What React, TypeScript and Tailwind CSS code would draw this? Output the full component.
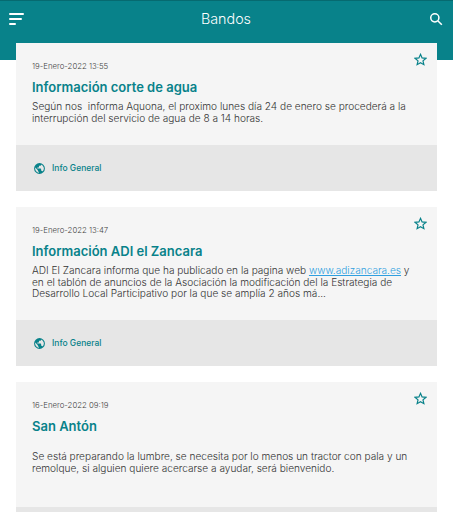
import React from "react"

type Bando = {
	date: string,
	title: string,
	body: React.ReactNode,
	bodyClass: string,
	tag?: boolean,
}

const bandos: Bando[] = [
	{
		date: "19-Enero-2022 13:55",
		title: "Información corte de agua",
		body: <>Según nos&nbsp; informa Aquona, el proximo lunes día 24 de enero se procederá a la interrupción del servicio de agua de 8 a 14 horas.</>,
		bodyClass: "h-[44px] mt-[4px]",
		tag: true,
	},
	{
		date: "19-Enero-2022 13:47",
		title: "Información ADI el Zancara",
		body: <>ADI El Zancara informa que ha publicado en la pagina web <span className="text-[#2f9fe0] underline">www.adizancara.es</span> y en el tablón de anuncios de la Asociación la modificación del la Estrategia de Desarrollo Local Participativo por la que se amplía 2 años má...</>,
		bodyClass: "h-[55px] mt-[4px]",
		tag: true,
	},
	{
		date: "16-Enero-2022 09:19",
		title: "San Antón",
		body: <>Se está preparando la lumbre, se necesita por lo menos un tractor con pala y un remolque, si alguien quiere acercarse a ayudar, será bienvenido.</>,
		bodyClass: "h-[56px] mt-[15px]",
	},
]

function Star() {
	return (
		<svg width="13" height="13" viewBox="0 0 24 24" fill="none" stroke="#08828a" strokeWidth="2.2" strokeLinejoin="miter" className="shrink-0 mt-[10px]">
			<path d="M12 2.5l2.9 6.6 7.1.7-5.4 4.7 1.6 7-6.2-3.7-6.2 3.7 1.6-7L2 9.8l7.1-.7z" />
		</svg>
	)
}

function Card({ bando }: { bando: Bando }) {
	return (
		<div className="bg-[#f5f5f5]">
			<div className="pl-[16px] pr-[10px]">
				<div className="flex justify-between">
					<div className="text-[7.8px] leading-[12px] font-light text-[#444] mt-[17px]">{bando.date}</div>
					<Star />
				</div>
				<div className="text-[13px] leading-[20px] font-semibold text-[#08828a] mt-[5px]">{bando.title}</div>
				<div className={"text-[10.1px] leading-[11.7px] font-light text-[#333] pr-[15px] " + bando.bodyClass}>{bando.body}</div>
			</div>
			{bando.tag ? (
				<div className="h-[46px] bg-[#e6e6e6] flex items-center pl-[17px] gap-[6px]">
					<svg width="13" height="13" viewBox="0 0 24 24" fill="#08828a">
						<path d="M12 2a10 10 0 1 0 0 20 10 10 0 0 0 0-20zm-1 17.9A8 8 0 0 1 4.2 10.2L9 15v1c0 1.1.9 2 2 2v1.9zm6.9-2.5A2 2 0 0 0 16 16h-1v-3c0-.6-.4-1-1-1H8v-2h2c.6 0 1-.4 1-1V7h2c1.1 0 2-.9 2-2v-.4a8 8 0 0 1 2.9 12.8z" />
					</svg>
					<span className="text-[8.5px] font-medium text-[#08828a]">Info General</span>
				</div>
			) : (
				<div className="h-[5px] bg-[#e6e6e6]"></div>
			)}
		</div>
	)
}

export default function App() {
	return (
		<div className="w-[453px] h-[512px] overflow-hidden bg-white font-[family-name:Inter]">
			<div className="h-[60px] bg-[#08828a] border-t border-[#066a70] flex justify-between pl-[9px] pr-[10px] pt-[12px]">
				<svg width="15" height="14" viewBox="0 0 15 14" fill="white">
					<rect x="0" y="0" width="15" height="2" rx="1" />
					<rect x="0" y="5" width="13" height="2" rx="1" />
					<rect x="0" y="10" width="7" height="2" rx="1" />
				</svg>
				<div className="text-[14.3px] leading-[14px] mt-[-1px] mr-[1px] font-light text-white">Bandos</div>
				<svg width="14" height="14" viewBox="0 0 24 24" fill="none" stroke="white" strokeWidth="2.6" className="mt-[-1px]">
					<circle cx="10" cy="10" r="7" />
					<path d="M15.5 15.5L22 22" />
				</svg>
			</div>
			<div className="flex flex-col gap-[16px] px-[16px] mt-[-17px]">
				{bandos.map((b) => (
					<Card key={b.date} bando={b} />
				))}
			</div>
		</div>
	)
}
